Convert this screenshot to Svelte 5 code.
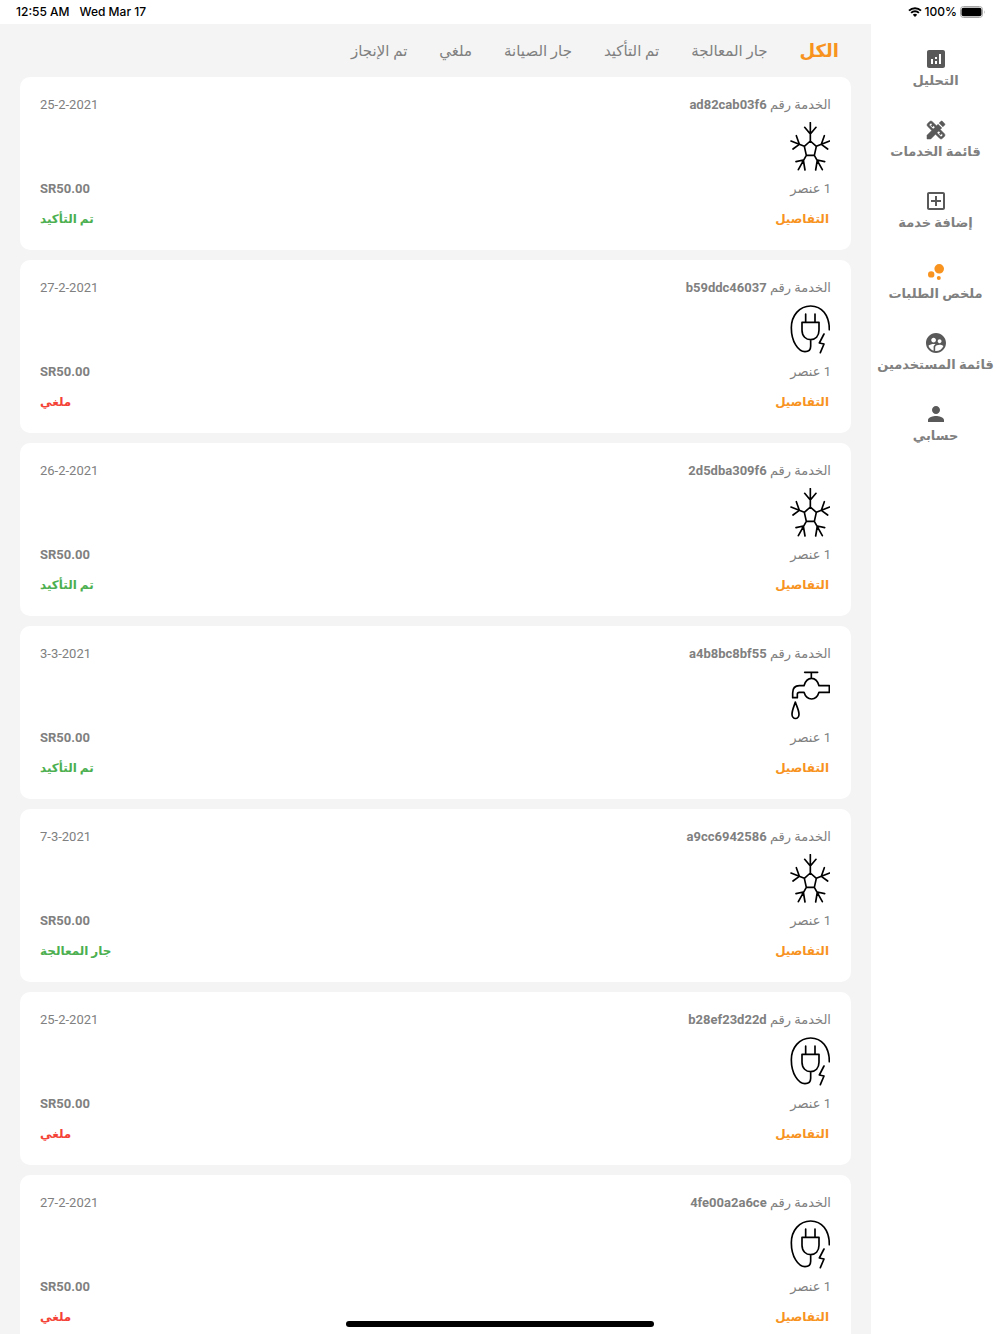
<script lang="ts">
  // Orders summary page: status bar, right-hand navigation, status tabs and order cards.

  type ServiceIcon = 'cooling' | 'power' | 'water';

  interface Order {
    id: string;
    date: string;
    icon: ServiceIcon;
    status: string;
  }

  const tabs: string[] = ['الكل', 'جار المعالجة', 'تم التأكيد', 'جار الصيانة', 'ملغي', 'تم الإنجاز'];

  const navItems = [
    { icon: 'analytics', label: 'التحليل' },
    { icon: 'design',    label: 'قائمة الخدمات' },
    { icon: 'add',       label: 'إضافة خدمة' },
    { icon: 'bubbles',   label: 'ملخص الطلبات' },
    { icon: 'users',     label: 'قائمة المستخدمين' },
    { icon: 'person',    label: 'حسابي' },
  ];

  const orders: Order[] = [
    { id: 'ad82cab03f6', date: '25-2-2021', icon: 'cooling', status: 'تم التأكيد' },
    { id: 'b59ddc46037', date: '27-2-2021', icon: 'power',   status: 'ملغي' },
    { id: '2d5dba309f6', date: '26-2-2021', icon: 'cooling', status: 'تم التأكيد' },
    { id: 'a4b8bc8bf55', date: '3-3-2021',  icon: 'water',   status: 'تم التأكيد' },
    { id: 'a9cc6942586', date: '7-3-2021',  icon: 'cooling', status: 'جار المعالجة' },
    { id: 'b28ef23d22d', date: '25-2-2021', icon: 'power',   status: 'ملغي' },
    { id: '4fe00a2a6ce', date: '27-2-2021', icon: 'power',   status: 'ملغي' },
  ];

  const navPaths: Record<string, string> = {
    analytics:
      'M19 3H5c-1.1 0-2 .9-2 2v14c0 1.1.9 2 2 2h14c1.1 0 2-.9 2-2V5c0-1.1-.9-2-2-2zM9 17H7v-5h2v5zm4 0h-2v-3h2v3zm0-5h-2v-2h2v2zm4 5h-2V7h2v10z',
    design:
      'M16.24 11.51l1.57-1.57-3.75-3.75-1.57 1.57-4.14-4.13c-.78-.78-2.05-.78-2.83 0l-1.9 1.9c-.78.78-.78 2.05 0 2.83l4.13 4.13L3 17.25V21h3.75l4.76-4.76 4.13 4.13c.95.95 2.23.6 2.83 0l1.9-1.9c.78-.78.78-2.05 0-2.83l-4.13-4.13zm-7.06-.44L5.04 6.94l1.89-1.9L8.2 6.31 7.02 7.5l1.41 1.41 1.19-1.19 1.45 1.45-1.89 1.9zm7.88 7.89l-4.13-4.13 1.9-1.9 1.45 1.45-1.19 1.19 1.41 1.41 1.19-1.19 1.27 1.27-1.9 1.9zM20.71 7.04c.39-.39.39-1.02 0-1.41l-2.34-2.34c-.47-.47-1.12-.29-1.41 0l-1.83 1.83 3.75 3.75 1.83-1.83z',
    add:
      'M19 3H5c-1.11 0-2 .9-2 2v14c0 1.1.89 2 2 2h14c1.1 0 2-.9 2-2V5c0-1.1-.9-2-2-2zm0 16H5V5h14v14zm-8-2h2v-4h4v-2h-4V7h-2v4H7v2h4z',
    bubbles:
      'M4 14.4a3.2 3.2 0 1 0 6.4 0a3.2 3.2 0 1 0-6.4 0zM12.8 18a2 2 0 1 0 4 0a2 2 0 1 0-4 0zM10.4 8.8a4.8 4.8 0 1 0 9.6 0a4.8 4.8 0 1 0-9.6 0z',
    users:
      'M11.99 2c-5.52 0-10 4.48-10 10s4.48 10 10 10 10-4.48 10-10-4.48-10-10-10zm3.61 6.34c1.07 0 1.93.86 1.93 1.93 0 1.07-.86 1.93-1.93 1.93-1.07 0-1.93-.86-1.93-1.93-.01-1.07.86-1.93 1.93-1.93zm-6-1.58c1.3 0 2.36 1.06 2.36 2.36 0 1.3-1.06 2.36-2.36 2.36s-2.36-1.06-2.36-2.36c0-1.31 1.05-2.36 2.36-2.36zm0 9.13v3.75c-2.4-.75-4.3-2.6-5.14-4.96 1.05-1.12 3.67-1.69 5.14-1.69.53 0 1.2.08 1.9.22-1.64.87-1.9 2.02-1.9 2.68zM11.99 20c-.27 0-.53-.01-.79-.04v-4.07c0-1.42 2.94-2.13 4.4-2.13 1.07 0 2.92.39 3.84 1.15-1.17 2.97-4.06 5.09-7.45 5.09z',
    person:
      'M12 12c2.21 0 4-1.79 4-4s-1.79-4-4-4-4 1.79-4 4 1.79 4 4 4zm0 2c-2.67 0-8 1.34-8 4v2h16v-2c0-2.66-5.33-4-8-4z',
  };

  const servicePaths: Record<ServiceIcon, string> = {
    cooling:
      'M61 2V57M44 16L61 36L78 16M61 57L79 73L73 100H49L43 73ZM79 73L119 57M103 41L94 67L113 81M43 73L3 57M19 41L28 67L9 81M73 100L97 143M104 119L82 114L77 144M49 100L25 143M18 119L40 114L45 144',
    power:
      'M118 74C118 30 95 3 62 3C28 3 4 32 4 68C4 110 25 140 45 140Q62 140 62 124V104M36 52H87V76C87 94 76 104 62 104S36 94 36 76ZM47 27V52M75 27V52M102 87L88 114L102 117L91 143',
    water:
      'M44 4H83M64 4V22M42 44C46 30 54 22 65 22S83 30 87 44H118V64H87C83 77 76 84 65 84S46 77 42 64H28Q22 64 22 70V80H8V66C8 52 14 44 28 44ZM16 93C12 106 6 118 6 130A10 12 0 0 0 27 130C27 118 20 106 16 93Z',
  };

  let activeTab = $state(0);
  let activeNav = $state(3);

  const visibleOrders = $derived(
    activeTab === 0 ? orders : orders.filter((o) => o.status === tabs[activeTab])
  );
</script>

<div class="app" dir="rtl">
  <header class="status-bar" dir="ltr">
    <div class="clock">
      <span>12:55 AM</span>
      <span>Wed Mar 17</span>
    </div>
    <div class="device">
      <svg class="wifi" viewBox="0 0 14 10" aria-hidden="true">
        <path d="M1 3.6A8.6 8.6 0 0 1 13 3.6M3.1 5.9A5.6 5.6 0 0 1 10.9 5.9" />
        <path class="wifi-dot" d="M7 10L4.8 7.7A3.2 3.2 0 0 1 9.2 7.7Z" />
      </svg>
      <span>100%</span>
      <svg class="battery" viewBox="0 0 25 12" aria-hidden="true">
        <rect class="shell" x="0.5" y="0.5" width="22" height="11" rx="3" />
        <rect x="1.5" y="1.7" width="20" height="8.6" rx="2" />
        <path class="cap" d="M24 4.2Q25.2 6 24 7.8Z" />
      </svg>
    </div>
  </header>

  <div class="body">
    <nav class="sidebar" aria-label="القائمة الرئيسية">
      {#each navItems as item, i (item.icon)}
        <button
          class="nav-item"
          class:active={activeNav === i}
          onclick={() => (activeNav = i)}
          aria-current={activeNav === i ? 'page' : undefined}
        >
          <svg class={item.icon} viewBox="0 0 24 24" aria-hidden="true"><path d={navPaths[item.icon]} /></svg>
          <span>{item.label}</span>
        </button>
      {/each}
    </nav>

    <main class="content">
      <div class="tabs">
        {#each tabs as tab, i (tab)}
          <button
            class="tab"
            class:active={activeTab === i}
            aria-pressed={activeTab === i}
            onclick={() => (activeTab = i)}>{tab}</button>
        {/each}
      </div>

      <div class="orders">
        {#each visibleOrders as order (order.id)}
          <article class="card">
            <div class="row">
              <span>الخدمة رقم <b>{order.id}</b></span>
              <time dir="ltr">{order.date}</time>
            </div>
            <svg class="service" viewBox="0 0 120 150" aria-hidden="true">
              <path d={servicePaths[order.icon]} />
            </svg>
            <div class="row">
              <span>1 عنصر</span>
              <b dir="ltr">SR50.00</b>
            </div>
            <div class="row actions">
              <a class="details" href="#{order.id}">التفاصيل</a>
              <span class="status" class:cancelled={order.status === 'ملغي'}>{order.status}</span>
            </div>
          </article>
        {/each}
      </div>
    </main>
  </div>

  <div class="home-indicator"></div>
</div>

<style>
  :global(body) {
    margin: 0;
  }

  .app {
    position: relative;
    height: 100vh;
    display: flex;
    flex-direction: column;
    overflow: hidden;
    background: #fff;
    color: #808080;
    font-family: Roboto, 'DejaVu Sans', sans-serif;
    font-size: 13px;
    line-height: 20px;
  }

  button {
    padding: 0;
    border: none;
    background: transparent;
    color: inherit;
    font: inherit;
    cursor: pointer;
  }

  /* Status bar */
  .status-bar {
    flex-shrink: 0;
    height: 24px;
    padding: 0 15px 0 16px;
    display: flex;
    align-items: center;
    justify-content: space-between;
    color: #000;
    font-family: Inter, sans-serif;
    font-size: 12px;
    font-weight: 500;
  }

  .clock {
    display: flex;
    gap: 10px;
  }

  .device {
    display: flex;
    align-items: center;
    gap: 3px;
  }

  .wifi {
    width: 14px;
    height: 10px;
    fill: none;
    stroke: #000;
    stroke-width: 2;
  }

  .wifi-dot {
    fill: #000;
    stroke: none;
  }

  .battery {
    width: 25px;
    height: 12px;
  }

  .shell {
    fill: none;
    stroke: #a6a6a6;
  }

  .cap {
    fill: #a6a6a6;
  }

  .body {
    flex: 1;
    min-height: 0;
    display: flex;
  }

  /* Navigation */
  .sidebar {
    flex-shrink: 0;
    width: 129px;
    padding-top: 23px;
    display: flex;
    flex-direction: column;
    gap: 27px;
  }

  .nav-item {
    display: flex;
    flex-direction: column;
    align-items: center;
    font-size: 13px;
    font-weight: 700;
    white-space: nowrap;
  }

  .nav-item svg {
    width: 24px;
    height: 24px;
    fill: #595959;
  }

  .nav-item .design {
    stroke: #595959;
    stroke-width: 0.5;
  }

  .nav-item.active svg {
    fill: #f7931e;
  }

  /* Orders */
  .content {
    flex: 1;
    min-width: 0;
    padding: 0 20px;
    overflow: hidden;
    background: #f4f4f4;
  }

  .tabs {
    height: 53px;
    padding: 0 12px;
    display: flex;
    align-items: center;
    gap: 32px;
  }

  .tab {
    font-size: 15px;
    white-space: nowrap;
  }

  .tab.active {
    color: #f7931e;
    font-size: 18px;
    font-weight: 700;
  }

  .orders {
    display: flex;
    flex-direction: column;
    gap: 10px;
  }

  .card {
    padding: 18px 20px 21px;
    border-radius: 10px;
    background: #fff;
  }

  .row {
    height: 20px;
    display: flex;
    justify-content: space-between;
    white-space: nowrap;
  }

  .service {
    display: block;
    width: 40px;
    height: 50px;
    margin: 7px 1px;
    fill: none;
    stroke: #000;
    stroke-width: 5;
    stroke-linecap: round;
    stroke-linejoin: round;
  }

  .actions {
    margin-top: 10px;
    font-size: 12px;
    font-weight: 700;
  }

  .details {
    padding-right: 2px;
    color: #f7931e;
    text-decoration: none;
  }

  .status {
    color: #4caf50;
  }

  .status.cancelled {
    color: #f44336;
  }

  .home-indicator {
    position: absolute;
    bottom: 7px;
    left: 50%;
    width: 308px;
    height: 6px;
    margin-left: -154px;
    border-radius: 3px;
    background: #000;
  }
</style>
